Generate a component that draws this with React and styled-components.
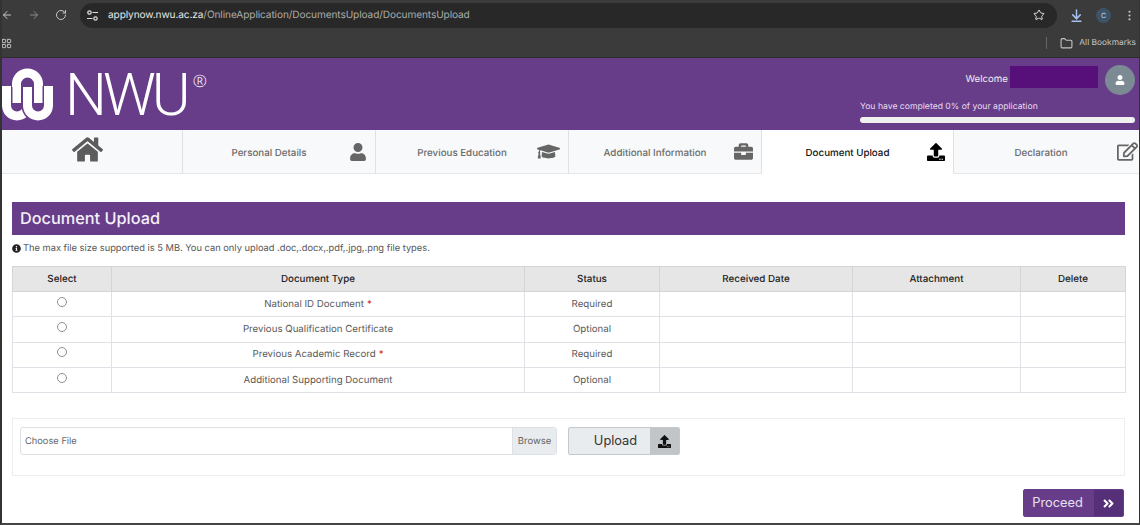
import React from 'react';
import styled, { createGlobalStyle } from 'styled-components';
import { ArrowLeft, ArrowRight, RotateCw, Star, ArrowDownToLine, MoreVertical, LayoutGrid, Folder } from 'lucide-react';
import { FaHome, FaUser, FaGraduationCap, FaBriefcase, FaUpload, FaRegEdit, FaAngleDoubleRight, FaInfoCircle } from 'react-icons/fa';

const GlobalStyle = createGlobalStyle`
    html, body { margin: 0; padding: 0; background: #fff; }
    * { box-sizing: border-box; }
`;

const purple = '#673d8a';

const Page = styled.div`
    width: 1140px;
    height: 525px;
    overflow: hidden;
    border-left: 2px solid #333;
    border-right: 1px solid #333;
    border-bottom: 2px solid #444;
    font-family: Inter, "Open Sans", sans-serif;
    text-rendering: geometricPrecision;
    background: #fff;
    display: flex;
    flex-direction: column;
`;

const Toolbar = styled.div`
    height: 29px;
    background: #3b3b3b;
    display: flex;
    align-items: center;
    color: #c4c7c5;
    padding-top: 1px;
`;

const NavIcons = styled.div`
    width: 78px;
    display: flex;
    align-items: center;
    gap: 15px;
    margin-left: -1px;
    margin-right: 1px;
`;

const AddressBar = styled.div`
    width: 977px;
    height: 25px;
    border-radius: 13px;
    background: #282828;
    display: flex;
    align-items: center;
    padding: 0 12px 0 6px;
`;

const SiteChip = styled.svg`
    width: 13px;
    height: 13px;
    margin-right: 9px;
    flex: none;
`;

const Url = styled.span`
    flex: 1;
    font-size: 10.1px;
    letter-spacing: -0.1px;
    color: #ababab;
    white-space: nowrap;
    b { font-weight: 400; color: #e6e6e6; }
`;

const ToolIcons = styled.div`
    flex: 1;
    display: flex;
    align-items: center;
    justify-content: space-between;
    padding: 0 3px 0 12px;
`;

const Profile = styled.span`
    width: 15px;
    height: 15px;
    border-radius: 50%;
    background: #3d5466;
    color: #c8d8e6;
    font-size: 7px;
    display: flex;
    align-items: center;
    justify-content: center;
`;

const Bookmarks = styled.div`
    height: 29px;
    background: #3b3b3b;
    border-bottom: 1px solid #2c2c2c;
    display: flex;
    align-items: center;
    justify-content: space-between;
    color: #c4c7c5;
    padding-right: 3px;
    > svg { margin-left: -1px; }
`;

const BookmarkFolder = styled.div`
    display: flex;
    align-items: center;
    font-size: 8.4px;
    color: #c4c7c5;
    gap: 6px;
    &::before {
        content: '';
        width: 1px;
        height: 12px;
        background: #666;
        margin-right: 7px;
    }
`;

const Header = styled.header`
    height: 72px;
    background: ${purple};
    display: flex;
    justify-content: space-between;
    color: #fff;
`;

const Brand = styled.div`
    display: flex;
    align-items: flex-start;
    padding-top: 9px;
`;

const Wordmark = styled.span`
    font-family: Roboto, sans-serif;
    font-size: 59px;
    font-weight: 300;
    line-height: 59px;
    margin: -1px 0 0 9px;
    letter-spacing: -4px;
`;

const Registered = styled.span`
    font-family: "Open Sans", sans-serif;
    font-size: 17px;
    line-height: 17px;
    font-weight: 300;
    margin-left: 6px;
    margin-top: 5px;
`;

const Account = styled.div`
    width: 275px;
    margin-right: 4px;
    padding-top: 7px;
`;

const WelcomeRow = styled.div`
    display: flex;
    justify-content: flex-end;
    align-items: flex-start;
    font-size: 9.7px;
    height: 31px;
`;

const WelcomeLabel = styled.span`
    margin-top: 9px;
    color: #eee;
`;

const NameMask = styled.span`
    width: 88px;
    height: 22px;
    margin: 1px 7px 0 2px;
    background: #57107a;
`;

const Avatar = styled.span`
    width: 30px;
    height: 30px;
    border-radius: 50%;
    background: #7b8a93;
    display: flex;
    align-items: center;
    justify-content: center;
    color: #fff;
    font-size: 10px;
`;

const ProgressLabel = styled.div`
    font-size: 8.65px;
    line-height: 12px;
    color: #e6dcef;
    margin-top: 5px;
`;

const ProgressBar = styled.div`
    height: 6px;
    margin-top: 4px;
    border-radius: 3px;
    background: #f0f0f0;
`;

const Tabs = styled.nav`
    height: 44px;
    display: grid;
    grid-template-columns: 180px 193px 193px 193px 192px 186px;
    background: #f8f9fa;
    border-bottom: 1px solid #e6e8ea;
`;

const Tab = styled.div`
    display: flex;
    align-items: center;
    padding: 3px ${p => p.$last ? 1 : 8}px 0 ${p => p.$last ? 14 : 12}px;
    border-left: ${p => p.$first ? 'none' : '1px solid #dee2e6'};
    background: ${p => p.$active ? '#fff' : 'transparent'};
    margin-bottom: ${p => p.$active ? '-1px' : '0'};
    color: ${p => p.$active ? '#000' : '#666'};
    font-size: 9.75px;
    font-weight: 500;
`;

const TabLabel = styled.span`
    flex: 1;
    text-align: center;
    color: ${p => p.$active ? '#111' : '#6b6b6b'};
`;

const TabIcon = styled.span`
    width: 24px;
    display: flex;
    justify-content: flex-end;
    margin-top: -3px;
    font-size: ${p => p.$size || 20}px;
`;

const HomeTab = styled(Tab)`
    justify-content: center;
    padding: 0 10px 4px 0;
    font-size: 31px;
    color: #5c5c5c;
`;

const Content = styled.main`
    flex: 1;
    padding: 28px 14px 0 10px;
    display: flex;
    flex-direction: column;
`;

const PageTitle = styled.h1`
    margin: 0;
    height: 33px;
    background: ${purple};
    color: #f4f0f7;
    font-size: 16.3px;
    font-weight: 500;
    line-height: 33px;
    padding-left: 8px;
`;

const Notice = styled.p`
    margin: 8px 0 0;
    height: 23px;
    display: flex;
    align-items: flex-start;
    gap: 2px;
    font-size: 9.3px;
    line-height: 11px;
    color: #555;
    svg { color: #222; flex: none; margin-top: 1px; }
`;

const Table = styled.table`
    width: 1113px;
    table-layout: fixed;
    border-collapse: collapse;
    font-size: 9.7px;
`;

const HeadCell = styled.th`
    height: 25px;
    width: ${p => p.$w}px;
    padding: 1px 0 0;
    background: #e6e6e6;
    border: 1px solid #d5d5d5;
    color: #222;
    font-weight: 500;
    font-size: 9.8px;
`;

const Cell = styled.td`
    height: 25.35px;
    padding: 0;
    border: 1px solid #dee2e6;
    text-align: center;
    color: #5a5a5a;
`;

const Radio = styled.input`
    appearance: none;
    display: block;
    width: 10px;
    height: 10px;
    margin: -5px auto 0;
    border: 1px solid #8f8f8f;
    border-radius: 50%;
    background: #fff;
`;

const Req = styled.span`
    color: #d9262c;
    margin-left: 3px;
`;

const UploadPanel = styled.section`
    margin-top: 25px;
    height: 58px;
    border: 1px solid #eeeeee;
    padding: 8px 0 0 7px;
    display: flex;
    align-items: flex-start;
    gap: 11px;
`;

const FileInput = styled.div`
    width: 537px;
    height: 28px;
    display: flex;
    border: 1px solid #dde0e4;
    border-radius: 3px;
    overflow: hidden;
`;

const FileName = styled.span`
    flex: 1;
    padding-left: 4px;
    font-size: 9.3px;
    line-height: 27px;
    color: #666;
`;

const BrowseLabel = styled.span`
    width: 44px;
    background: #e9ecef;
    border-left: 1px solid #dde0e4;
    text-align: center;
    font-size: 9.5px;
    line-height: 27px;
    color: #666;
`;

const SplitButton = styled.button`
    display: flex;
    padding: 0;
    height: 28px;
    width: ${p => p.$w}px;
    border: 1px solid ${p => p.$border};
    border-radius: 2px;
    background: ${p => p.$bg};
    color: ${p => p.$fg};
    font: inherit;
    font-size: 12.8px;
    overflow: hidden;
`;

const ButtonLabel = styled.span`
    flex: 1;
    text-align: center;
    line-height: 26px;
    padding: ${p => p.$pad || '0'};
`;

const ButtonIcon = styled.span`
    width: 29px;
    height: 100%;
    display: flex;
    align-items: center;
    justify-content: center;
    background: ${p => p.$bg};
    color: ${p => p.$fg};
    font-size: ${p => p.$size}px;
`;

const Footer = styled.div`
    display: flex;
    justify-content: flex-end;
    margin: 13px 0 0;
    padding-right: 1px;
`;

const Logo = () => (
    <svg width="54" height="54" viewBox="2 0 54 54">
        <g fill="none" stroke="#fff" strokeWidth="9">
            <path d="M16.5 36V17a11 11 0 0 1 22 0V36" />
            <path d="M6.5 20V39a10.5 10.5 0 0 0 21 0V22" stroke={purple} strokeWidth="12" />
            <path d="M6.5 19V38.500a10.500 10.500 0 0 0 21 0V20" />
            <path d="M27.500 20V38.500a10.500 10.500 0 0 0 21 0V19" stroke={purple} strokeWidth="12" />
            <path d="M27.500 20V38.500a10.500 10.500 0 0 0 21 0V19" />
        </g>
    </svg>
);

const rows = [
    { name: 'National ID Document', status: 'Required', required: true },
    { name: 'Previous Qualification Certificate', status: 'Optional' },
    { name: 'Previous Academic Record', status: 'Required', required: true },
    { name: 'Additional Supporting Document', status: 'Optional' },
];

const columns = [
    { title: 'Select', w: 99 },
    { title: 'Document Type', w: 413 },
    { title: 'Status', w: 135 },
    { title: 'Received Date', w: 193 },
    { title: 'Attachment', w: 168 },
    { title: 'Delete', w: 105 },
];

const tabs = [
    { label: 'Personal Details', Icon: FaUser, size: 18 },
    { label: 'Previous Education', Icon: FaGraduationCap, size: 23 },
    { label: 'Additional Information', Icon: FaBriefcase, size: 19 },
    { label: 'Document Upload', Icon: FaUpload, size: 18, active: true },
    { label: 'Declaration', Icon: FaRegEdit, size: 21, last: true },
];

const App = () => {
    return (
        <Page>
            <GlobalStyle />
            <Toolbar>
                <NavIcons>
                    <ArrowLeft size={12} />
                    <ArrowRight size={12} color="#8a8a8a" />
                    <RotateCw size={12} />
                </NavIcons>
                <AddressBar>
                    <SiteChip viewBox="0 0 13 13" fill="none" stroke="#dcdcdc" strokeWidth="1.2">
                        <circle cx="3.5" cy="3.500" r="1.700" />
                        <path d="M6.500 3.500H12M1 9.500H6.500" />
                        <circle cx="9.500" cy="9.500" r="1.700" />
                    </SiteChip>
                    <Url><b>applynow.nwu.ac.za</b>/OnlineApplication/DocumentsUpload/DocumentsUpload</Url>
                    <Star size={12} color="#e4e4e4" />
                </AddressBar>
                <ToolIcons>
                    <ArrowDownToLine size={15} color="#a8c0ee" strokeWidth={2.4} />
                    <Profile>C</Profile>
                    <MoreVertical size={13} />
                </ToolIcons>
            </Toolbar>
            <Bookmarks>
                <LayoutGrid size={11} />
                <BookmarkFolder>
                    <Folder size={13} />
                    All Bookmarks
                </BookmarkFolder>
            </Bookmarks>
            <Header>
                <Brand>
                    <Logo />
                    <Wordmark>NWU</Wordmark>
                    <Registered>®</Registered>
                </Brand>
                <Account>
                    <WelcomeRow>
                        <WelcomeLabel>Welcome</WelcomeLabel>
                        <NameMask />
                        <Avatar><FaUser /></Avatar>
                    </WelcomeRow>
                    <ProgressLabel>You have completed 0% of your application</ProgressLabel>
                    <ProgressBar />
                </Account>
            </Header>
            <Tabs>
                <HomeTab $first><FaHome /></HomeTab>
                {tabs.map(({ label, Icon, size, active, last }) => (
                    <Tab key={label} $active={active} $last={last}>
                        <TabLabel $active={active}>{label}</TabLabel>
                        <TabIcon $size={size}><Icon /></TabIcon>
                    </Tab>
                ))}
            </Tabs>
            <Content>
                <PageTitle>Document Upload</PageTitle>
                <Notice>
                    <FaInfoCircle size={9} />
                    The max file size supported is 5 MB. You can only upload .doc,.docx,.pdf,.jpg,.png file types.
                </Notice>
                <Table>
                    <thead>
                        <tr>
                            {columns.map(c => <HeadCell key={c.title} $w={c.w}>{c.title}</HeadCell>)}
                        </tr>
                    </thead>
                    <tbody>
                        {rows.map(r => (
                            <tr key={r.name}>
                                <Cell><Radio type="radio" name="doc" /></Cell>
                                <Cell>{r.name}{r.required && <Req>*</Req>}</Cell>
                                <Cell>{r.status}</Cell>
                                <Cell />
                                <Cell />
                                <Cell />
                            </tr>
                        ))}
                    </tbody>
                </Table>
                <UploadPanel>
                    <FileInput>
                        <FileName>Choose File</FileName>
                        <BrowseLabel>Browse</BrowseLabel>
                    </FileInput>
                    <SplitButton $w={112} $bg="#e9ecef" $fg="#333" $border="#c6c9cc">
                        <ButtonLabel $pad="0 0 0 12px">Upload</ButtonLabel>
                        <ButtonIcon $bg="#c2c5c7" $fg="#111" $size={13}><FaUpload /></ButtonIcon>
                    </SplitButton>
                </UploadPanel>
                <Footer>
                    <SplitButton $w={101} $bg={purple} $fg="#e8e0ef" $border={purple}>
                        <ButtonLabel $pad="0 3px 0 0">Proceed</ButtonLabel>
                        <ButtonIcon $bg="#552f78" $fg="#fff" $size={13}><FaAngleDoubleRight /></ButtonIcon>
                    </SplitButton>
                </Footer>
            </Content>
        </Page>
    );
};

export default App;
